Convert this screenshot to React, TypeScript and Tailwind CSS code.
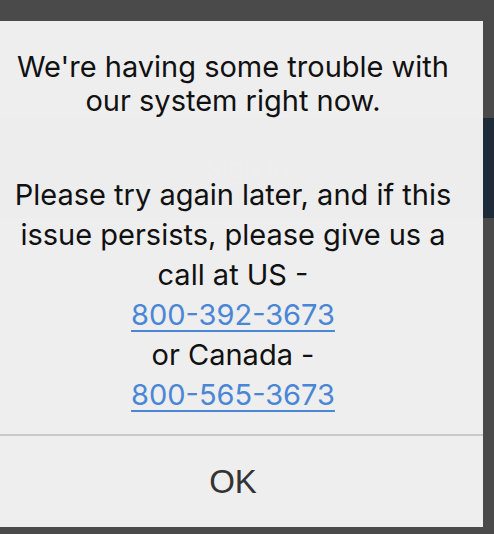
import React from "react";

const body = "font-['Inter','Noto_Sans',sans-serif]";

export default function App() {
  return (
    <div className="relative h-[534px] w-[494px] overflow-hidden bg-[#4a4a4a]">
      {/* login page behind the dialog (already dimmed) */}
      <div className={`flex flex-col ${body}`}>
        <div className="flex h-[118px] items-center gap-[6px] pl-[2px] pt-[21px] text-[26px] leading-none text-[#555555]">
          <span>•</span>
          <span>•</span>
          <span>•</span>
        </div>
        <button className="flex h-[100px] items-center justify-center bg-[#1f2b38] text-[26px] text-[#3c4652]">
          Sign In
        </button>
        <a className="mt-[32px] self-center text-[30px] text-[#3a3a3a] underline">Forgot Password?</a>
      </div>

      {/* dialog */}
      <div className="absolute left-[-17px] top-[21px] flex h-[506px] w-[500px] flex-col bg-[#f4f4f4]/[0.97]">
        <div className={`flex flex-1 flex-col items-center pt-[29px] text-center text-[29px] text-[#111111] ${body}`}>
          <p className="leading-[34px]">
            We're having some trouble with
            <br />
            our system right now.
          </p>
          <p className="mt-[57px] leading-[40px]">
            Please try again later, and if this
            <br />
            issue persists, please give us a
            <br />
            call at US -
            <br />
            <a className="text-[#4a86d6] underline decoration-[2px] underline-offset-[5px]">800-392-3673</a>
            <br />
            or Canada -
            <br />
            <a className="text-[#4a86d6] underline decoration-[2px] underline-offset-[5px]">800-565-3673</a>
          </p>
        </div>
        <div className="h-[2px] bg-[#c9c9c9]" />
        <button className="flex h-[91px] items-center justify-center font-['Liberation_Sans',Arial,sans-serif] text-[33px] text-[#333333]">
          OK
        </button>
      </div>
    </div>
  );
}
